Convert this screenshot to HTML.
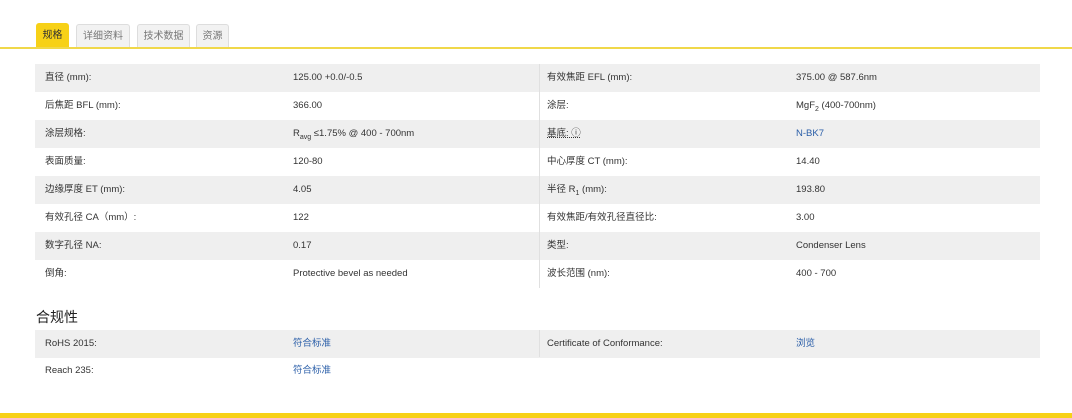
<!DOCTYPE html>
<html><head><meta charset="utf-8"><style>
*{margin:0;padding:0;box-sizing:border-box}
body{width:1072px;height:418px;background:#fff;font-family:"Liberation Sans","Noto Sans CJK SC",sans-serif;font-size:9.5px;color:#333;position:relative;overflow:hidden}
.tab{position:absolute;top:24px;height:24px;border:1px solid #ddd;border-bottom:none;border-radius:3px 3px 0 0;background:#f2f2f2;color:#777;font-size:10px;line-height:24px;text-align:center}
.tab.a{background:#f7d117;border-color:#f7d117;color:#333;top:23px;height:25px}
.line{position:absolute;left:0;top:47px;width:1072px;height:2px;background:#f0d84a}
.row{position:absolute;left:35px;width:1005px;height:28px;line-height:28px}
.g{background:#efefef}
.row span{position:absolute;top:0;white-space:nowrap}
.c1{left:10px}.c2{left:258px}.c3{left:512px}.c4{left:761px}
.vd{position:absolute;left:539px;top:64px;width:1px;height:224px;background:#e0e0e0}
.lnk{color:#2a5ea8}
h3{position:absolute;left:36px;top:307px;font-size:14px;font-weight:normal;color:#222}
.bot{position:absolute;left:0;top:413px;width:1072px;height:5px;background:#f7d117}
sub{font-size:7px;line-height:0}
</style></head><body>
<div class="tab a" style="left:36px;width:33px">规格</div>
<div class="tab" style="left:76px;width:54px">详细资料</div>
<div class="tab" style="left:137px;width:53px">技术数据</div>
<div class="tab" style="left:196px;width:33px">资源</div>
<div class="line"></div>

<div class="row g" style="top:64px"><span class="c1">直径 (mm):</span><span class="c2">125.00 +0.0/-0.5</span><span class="c3">有效焦距 EFL (mm):</span><span class="c4">375.00 @ 587.6nm</span></div>
<div class="row" style="top:92px"><span class="c1">后焦距 BFL (mm):</span><span class="c2">366.00</span><span class="c3">涂层:</span><span class="c4">MgF<sub>2</sub> (400-700nm)</span></div>
<div class="row g" style="top:120px"><span class="c1">涂层规格:</span><span class="c2">R<sub>avg</sub> ≤1.75% @ 400 - 700nm</span><span class="c3" style="text-decoration:underline dotted">基底: ⓘ</span><span class="c4 lnk">N-BK7</span></div>
<div class="row" style="top:148px"><span class="c1">表面质量:</span><span class="c2">120-80</span><span class="c3">中心厚度 CT (mm):</span><span class="c4">14.40</span></div>
<div class="row g" style="top:176px"><span class="c1">边缘厚度 ET (mm):</span><span class="c2">4.05</span><span class="c3">半径 R<sub>1</sub> (mm):</span><span class="c4">193.80</span></div>
<div class="row" style="top:204px"><span class="c1">有效孔径 CA（mm）:</span><span class="c2">122</span><span class="c3">有效焦距/有效孔径直径比:</span><span class="c4">3.00</span></div>
<div class="row g" style="top:232px"><span class="c1">数字孔径 NA:</span><span class="c2">0.17</span><span class="c3">类型:</span><span class="c4">Condenser Lens</span></div>
<div class="row" style="top:260px"><span class="c1">倒角:</span><span class="c2">Protective bevel as needed</span><span class="c3">波长范围 (nm):</span><span class="c4">400 - 700</span></div>
<div class="vd"></div>

<h3>合规性</h3>
<div class="row g" style="top:330px"><span class="c1">RoHS 2015:</span><span class="c2 lnk">符合标准</span><span class="c3">Certificate of Conformance:</span><span class="c4 lnk">浏览</span></div>
<div class="vd" style="top:330px;height:27px"></div>
<div class="row" style="top:357px"><span class="c1">Reach 235:</span><span class="c2 lnk">符合标准</span></div>
<div class="bot"></div>
</body></html>
